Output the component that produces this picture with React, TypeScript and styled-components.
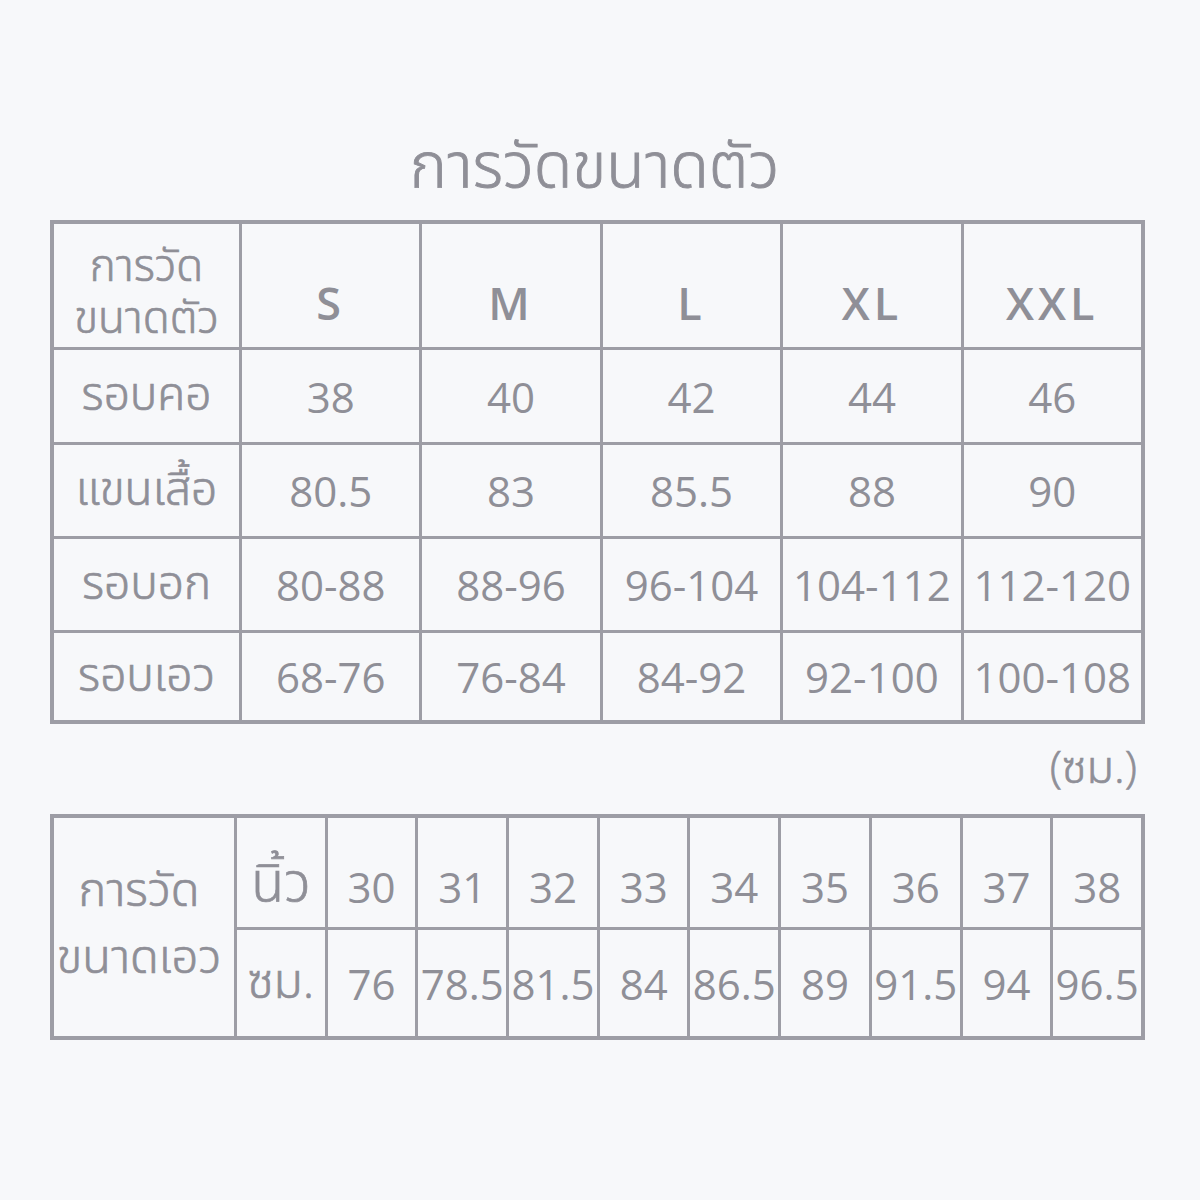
import React from 'react'
import styled, { createGlobalStyle, css } from 'styled-components'

const INK = '#8f8f97'
const LINE = '#9d9da5'
const PAPER = '#f7f8fa'

const GlobalStyle = createGlobalStyle`
  html, body {
    margin: 0;
    padding: 0;
    background: ${PAPER};
  }
`

// the Thai fallback only has light and regular, so thicken light a little
const thai = css`
  font-weight: 300;
  -webkit-text-stroke: 0.7px ${INK};
`

const Page = styled.div`
  width: 1200px;
  height: 1200px;
  box-sizing: border-box;
  padding: 128px 55px 0 50px;
  display: flex;
  flex-direction: column;
  background: ${PAPER};
  color: ${INK};
  font-family: "Open Sans", "Noto Sans Thai", "Noto Sans", sans-serif;
`

const Title = styled.h1`
  margin: 0 0 22px;
  height: 70px;
  line-height: 70px;
  text-align: center;
  font-size: 63px;
  padding-right: 6px;
  ${thai}
  -webkit-text-stroke-width: 0.9px;
`

const Grid = styled.div<{ $cols: string; $rows: string }>`
  display: grid;
  grid-template-columns: ${p => p.$cols};
  grid-template-rows: ${p => p.$rows};
  gap: 3px;
  background: ${LINE};
  border: 4px solid ${LINE};
`

const Cell = styled.div<{
  $size?: number
  $kind?: 'num' | 'thai' | 'size'
  $span?: number
  $pt?: number
  $pb?: number
  $pr?: number
}>`
  background: ${PAPER};
  box-sizing: border-box;
  display: flex;
  flex-direction: column;
  align-items: center;
  justify-content: center;
  text-align: center;
  white-space: nowrap;
  overflow: hidden;
  padding: ${p => p.$pt ?? 0}px ${p => p.$pr ?? 0}px ${p => p.$pb ?? 0}px 0;
  font-size: ${p => p.$size ?? 42}px;
  font-weight: 400;
  ${p => p.$kind === 'thai' && thai}
  ${p =>
    p.$kind === 'size' &&
    css`
      font-weight: 600;
      letter-spacing: 4px;
    `}
  ${p => (p.$span ? `grid-row: span ${p.$span};` : '')}
`

const Stack = styled.span<{ $lh: number }>`
  display: block;
  line-height: ${p => p.$lh}px;
`

const Unit = styled.div`
  height: 90px;
  display: flex;
  align-items: center;
  justify-content: flex-end;
  padding-right: 8px;
  font-size: 45px;
  ${thai}
`

const sizes = ['S', 'M', 'L', 'XL', 'XXL']

const bodyRows: [string, string[]][] = [
  ['รอบคอ', ['38', '40', '42', '44', '46']],
  ['แขนเสื้อ', ['80.5', '83', '85.5', '88', '90']],
  ['รอบอก', ['80-88', '88-96', '96-104', '104-112', '112-120']],
  ['รอบเอว', ['68-76', '76-84', '84-92', '92-100', '100-108']],
]

const inches = ['30', '31', '32', '33', '34', '35', '36', '37', '38']
const cms = ['76', '78.5', '81.5', '84', '86.5', '89', '91.5', '94', '96.5']

export default function App() {
  return (
    <>
      <GlobalStyle />
      <Page>
        <Title>การวัดขนาดตัว</Title>

        <Grid $cols="185px repeat(5, 1fr)" $rows="123px 92px 91px 91px 87px">
          <Cell $size={44} $kind="thai" $pt={8}>
            <Stack $lh={52}>การวัด</Stack>
            <Stack $lh={52}>ขนาดตัว</Stack>
          </Cell>
          {sizes.map(s => (
            <Cell key={s} $size={45} $kind="size" $pt={34}>{s}</Cell>
          ))}
          {bodyRows.map(([label, vals]) => (
            <React.Fragment key={label}>
              <Cell $size={46} $kind="thai">{label}</Cell>
              {vals.map((v, i) => (
                <Cell key={i}>{v}</Cell>
              ))}
            </React.Fragment>
          ))}
        </Grid>

        <Unit>(ซม.)</Unit>

        <Grid $cols="180px repeat(10, 1fr)" $rows="109px 106px">
          <Cell $size={47} $kind="thai" $span={2} $pb={10} $pr={10}>
            <Stack $lh={67}>การวัด</Stack>
            <Stack $lh={67}>ขนาดเอว</Stack>
          </Cell>
          <Cell $size={54} $kind="thai" $pt={22}>นิ้ว</Cell>
          {inches.map(v => (
            <Cell key={v} $pt={28}>{v}</Cell>
          ))}
          <Cell $size={48} $kind="thai">ซม.</Cell>
          {cms.map(v => (
            <Cell key={v}>{v}</Cell>
          ))}
        </Grid>
      </Page>
    </>
  )
}
